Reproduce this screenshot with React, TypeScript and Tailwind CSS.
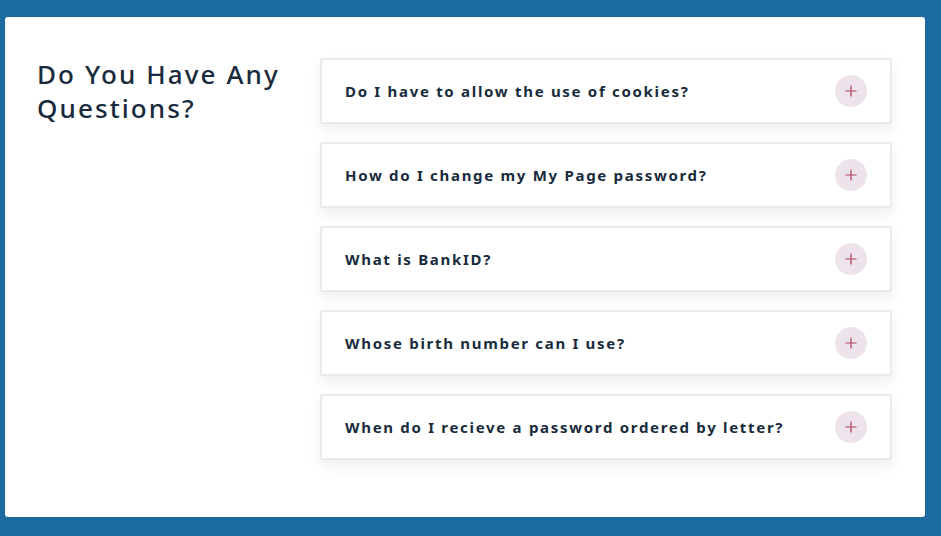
import React from "react";

const questions = [
  "Do I have to allow the use of cookies?",
  "How do I change my My Page password?",
  "What is BankID?",
  "Whose birth number can I use?",
  "When do I recieve a password ordered by letter?",
];

export default function App() {
  return (
    <div className="h-[536px] w-[941px] bg-[#1b6aa0] pt-[17px] pl-[5px] pr-[16px] pb-[19px]" style={{ fontFamily: '"Noto Sans", "Open Sans", sans-serif' }}>
      <div className="h-full w-full rounded-[3px] bg-white flex">
        <div className="w-[315px] pl-[32px] pt-[40px] pr-[10px]">
          <h2 className="text-[26px] leading-[34px] font-medium text-[#172b3d] tracking-[2.1px]">
            Do You Have Any Questions?
          </h2>
        </div>
        <div className="w-[572px] pt-[41px] flex flex-col gap-[18px]">
          {questions.map((q) => (
            <div
              key={q}
              className="h-[66px] rounded-[3px] border-2 border-[#ebebeb] bg-white shadow-[0_6px_14px_rgba(0,0,0,0.07)] flex items-center justify-between pl-[23px] pr-[23px]"
            >
              <span className="text-[15px] font-bold text-[#172b3d] tracking-[1.7px]">{q}</span>
              <span className="w-[32px] h-[32px] rounded-full bg-[#ece4ea] flex items-center justify-center">
                <svg width="12" height="12" viewBox="0 0 12 12">
                  <path d="M6 0.5v11M0.5 6h11" stroke="#b2405f" strokeWidth="1.2" fill="none" />
                </svg>
              </span>
            </div>
          ))}
        </div>
      </div>
    </div>
  );
}
